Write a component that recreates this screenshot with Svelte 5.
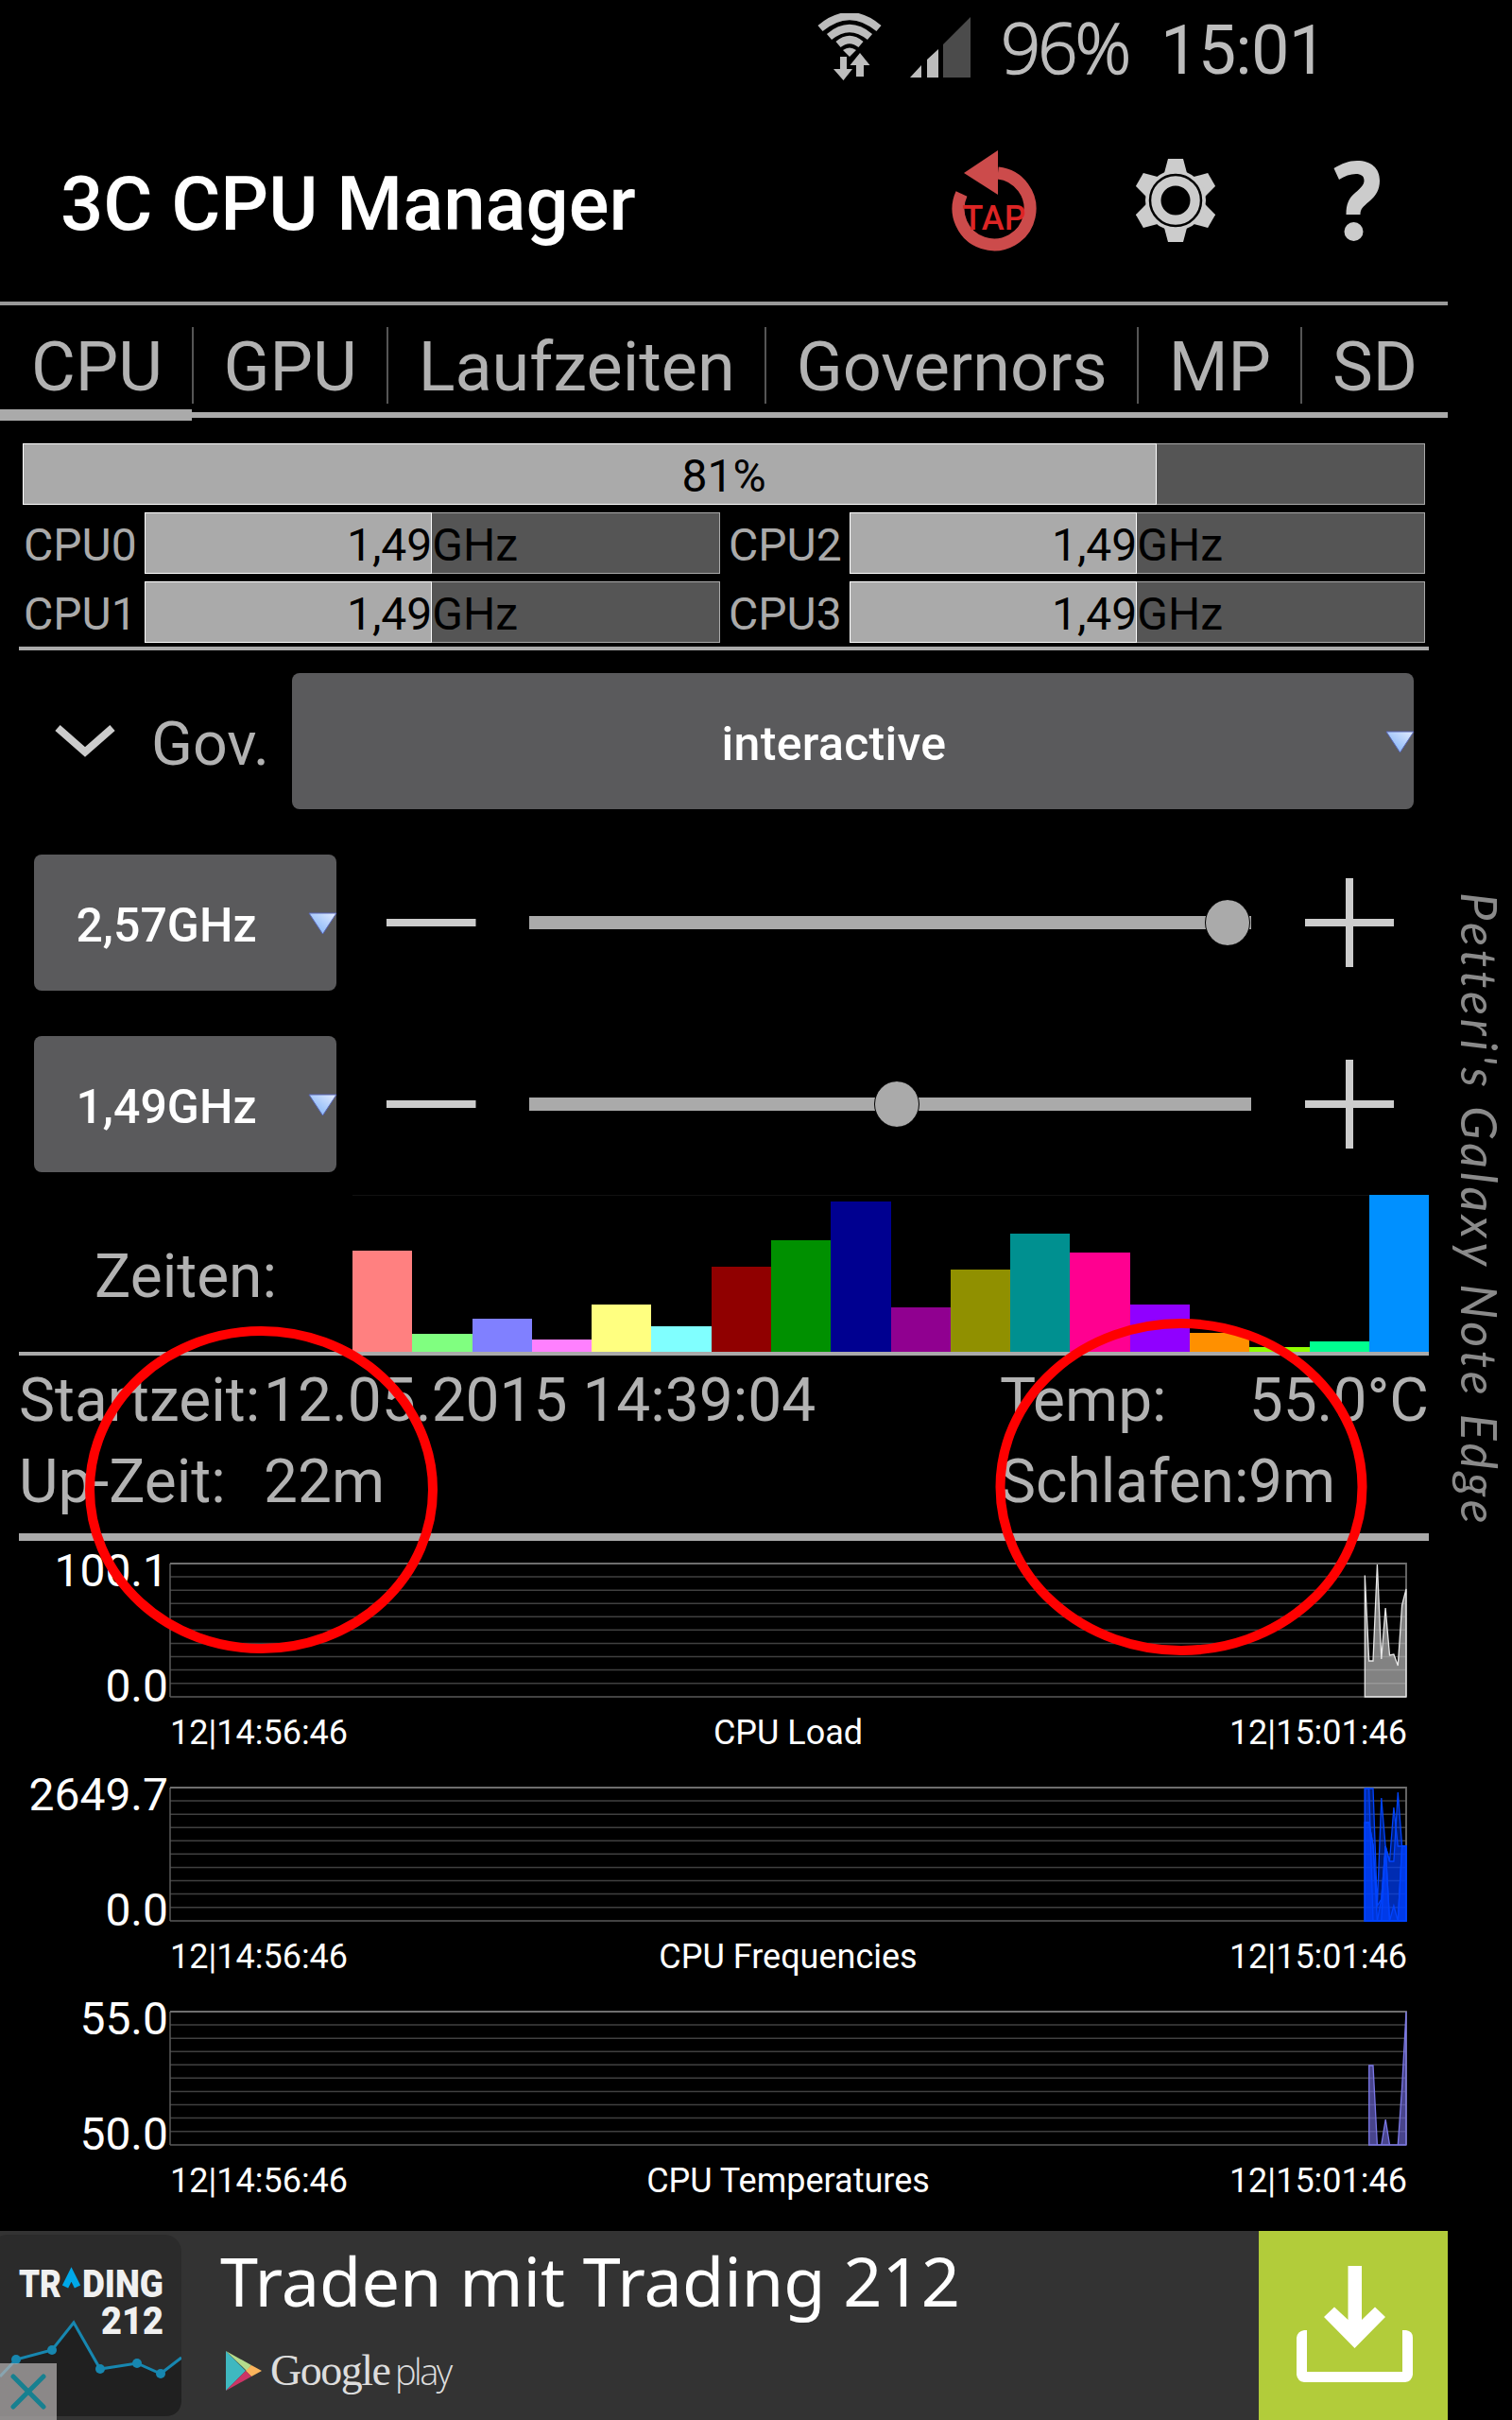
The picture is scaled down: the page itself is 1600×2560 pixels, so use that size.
<script lang="ts">
	const tabs = ['CPU', 'GPU', 'Laufzeiten', 'Governors', 'MP', 'SD'];
	let activeTab = $state('CPU');

	const load = 81;
	const cores = [
		{ name: 'CPU0', freq: '1,49GHz', fill: 50 },
		{ name: 'CPU2', freq: '1,49GHz', fill: 50 },
		{ name: 'CPU1', freq: '1,49GHz', fill: 50 },
		{ name: 'CPU3', freq: '1,49GHz', fill: 50 }
	];

	const sliders = [
		{ label: '2,57GHz', value: 739 },
		{ label: '1,49GHz', value: 389 }
	];

	// time spent in each frequency step
	const times = [
		{ color: '#ff8080', height: 107 },
		{ color: '#80ff80', height: 19 },
		{ color: '#8080ff', height: 35 },
		{ color: '#ff80ff', height: 13 },
		{ color: '#ffff80', height: 50 },
		{ color: '#80ffff', height: 27 },
		{ color: '#900000', height: 90 },
		{ color: '#009000', height: 118 },
		{ color: '#000090', height: 159 },
		{ color: '#900090', height: 47 },
		{ color: '#909000', height: 87 },
		{ color: '#009090', height: 125 },
		{ color: '#ff0090', height: 105 },
		{ color: '#9000ff', height: 50 },
		{ color: '#ff9000', height: 20 },
		{ color: '#90ff00', height: 5 },
		{ color: '#00ff90', height: 11 },
		{ color: '#0090ff', height: 166 }
	];

	const PLOT_W = 1308;
	const PLOT_H = 141;
	const STEP = 4.37;

	// series values are distances from the top of the plot, newest sample last
	const charts = [
		{
			title: 'CPU Load',
			max: '100.1',
			min: '0.0',
			stroke: '#e8e8e8',
			fill: 'rgba(200, 200, 200, 0.65)',
			series: [[12.6, 103, 103, 1, 101, 47, 97, 96, 108, 44, 27]]
		},
		{
			title: 'CPU Frequencies',
			max: '2649.7',
			min: '0.0',
			stroke: '#0044ff',
			fill: 'rgba(0, 64, 255, 0.45)',
			series: [
				[1, 1, 1, 125, 11, 62, 78, 21, 62, 62, 62],
				[37, 37, 61, 125, 118, 62, 78, 78, 5, 62, 62],
				[1, 1, 141, 141, 118, 62, 141, 125, 141, 62, 62],
				[37, 37, 61, 141, 141, 62, 141, 141, 141, 62, 62]
			]
		},
		{
			title: 'CPU Temperatures',
			max: '55.0',
			min: '50.0',
			stroke: '#7b78e6',
			fill: 'rgba(110, 105, 215, 0.65)',
			series: [[57, 57, 141, 141, 114, 141, 141, 141, 80, 0]]
		}
	];

	function linePath(values: number[]) {
		const start = PLOT_W - STEP * (values.length - 1);
		const pts = values.map((y, i) => `${(start + i * STEP).toFixed(1)} ${y}`);
		return `M${start.toFixed(1)} ${PLOT_H}L${pts.join('L')}V${PLOT_H}Z`;
	}
</script>

{#snippet arrow()}
	<svg class="arrow" width="31" height="25" viewBox="0 0 31 25">
		<defs>
			<linearGradient id="arrowFill" x1="0" y1="1" x2="1" y2="0">
				<stop offset="0.2" stop-color="#8ab8f8" />
				<stop offset="1" stop-color="#e4ecff" />
			</linearGradient>
		</defs>
		<path d="M1 1H30L15.500 23Z" fill="url(#arrowFill)" stroke="#5a68b8" stroke-width="1" />
	</svg>
{/snippet}

{#snippet meter(text: string, fill: number)}
	<div class="meter">
		<div class="fill" style="width: {fill}%"></div>
		<span>{text}</span>
	</div>
{/snippet}

<div class="screen">
	<main>
		<div class="status">
			<svg class="wifi" width="68" height="72" viewBox="0 0 68 72" fill="none" stroke="#bdbdbd">
				<path d="M3 16Q34 -10 65 16" stroke-width="8" />
				<path d="M12.500 25Q34 7 55.500 25" stroke-width="8" />
				<path d="M22 33Q34 23 46 33" stroke-width="8" />
				<path d="M27 39Q34 34 41 39L34 46Z" fill="#bdbdbd" stroke="none" />
				<path d="M24 46H31V59H37L27.500 71L17 59H24ZM41 67V55H34.500L45 42L55.500 55H49V67Z" fill="#bdbdbd" stroke="none" />
			</svg>
			<svg class="signal" width="64" height="64" viewBox="0 0 64 64">
				<path d="M0 64L12 51V64Z M18 64V45L30 34V64Z" fill="#bdbdbd" />
				<path d="M35 64V29L64 0V64Z" fill="#4b4b4b" />
			</svg>
			<span class="battery">96%</span>
			<span class="clock">15:01</span>
		</div>

		<header>
			<h1>3C CPU Manager</h1>
			<svg class="tap" width="90" height="108" viewBox="0 0 90 108">
				<path d="M10.500 46A38 38 0 1 0 49 24" fill="none" stroke="#cc4b4b" stroke-width="13" />
				<path d="M13 24L49 0V47Z" fill="#cc4b4b" />
				<text x="11.500" y="83.500">TAP</text>
			</svg>
			<svg class="gear" width="84" height="90" viewBox="-42 -45 84 90">
				{#each [0, 60, 120, 180, 240, 300] as angle}
					<path d="M-8 -44H8L12 -29L10 -20H-10L-12 -29Z" fill="#ccc" transform="rotate({angle})" />
				{/each}
				<circle r="32" fill="#ccc" />
				<circle r="27" fill="none" stroke="#000" stroke-width="2.500" />
				<circle r="15.500" fill="#000" />
			</svg>
			<svg class="help" width="50" height="86" viewBox="0 0 50 86" fill="#ccc">
				<path d="M0.500 8C9 3 16 0 25 0C40 0 49 8 49 21C49 31 45 37 38 43C31 49 28.500 51 28.500 57H13.500C13.500 46 16 40 23 34C30 28 32.500 25 32.500 21C32.500 16 29 14 24 14C18 14 12 16 6 20Z" />
				<ellipse cx="21.500" cy="75" rx="10" ry="10" />
			</svg>
		</header>

		<nav>
			{#each tabs as tab}
				<button class="tab" class:active={tab === activeTab} onclick={() => (activeTab = tab)}>
					<span>{tab}</span>
				</button>
			{/each}
		</nav>

		<section class="usage">
			{@render meter(`${load}%`, load)}
			<div class="cores">
				{#each cores as core}
					<span class="core">{core.name}</span>
					{@render meter(core.freq, core.fill)}
				{/each}
			</div>
		</section>

		<section class="governor">
			<svg width="66" height="38" viewBox="0 0 66 38">
				<path d="M4 5L33 30.500L62 5" fill="none" stroke="#ccc" stroke-width="8" />
			</svg>
			<span class="gov-label">Gov.</span>
			<button class="spinner wide">interactive{@render arrow()}</button>
		</section>

		{#each sliders as slider}
			<section class="slider-row">
				<button class="spinner">{slider.label}{@render arrow()}</button>
				<svg class="minus" width="96" height="96" viewBox="0 0 96 96">
					<path d="M0 48H94.500" stroke="#ccc" stroke-width="8" />
				</svg>
				<div class="track">
					<div class="thumb" style="left: {slider.value}px"></div>
				</div>
				<svg class="plus" width="96" height="96" viewBox="0 0 96 96">
					<path d="M1 48H95M48 1V95" stroke="#ccc" stroke-width="8" />
				</svg>
			</section>
		{/each}

		<section class="times">
			<span class="times-label">Zeiten:</span>
			<div class="bars">
				{#each times as bar}
					<div style="height: {bar.height}px; background: {bar.color}"></div>
				{/each}
			</div>
		</section>

		<section class="info">
			<span>Startzeit:</span>
			<span>12.05.2015 14:39:04</span>
			<span>Temp:</span>
			<span class="right">55.0°C</span>
			<span>Up-Zeit:</span>
			<span>22m</span>
			<span>Schlafen:</span>
			<span>9m</span>
		</section>

		<section class="charts">
			{#each charts as chart}
				<div class="chart">
					<div class="scale">
						<span>{chart.max}</span>
						<span>{chart.min}</span>
					</div>
					<svg class="plot" width={PLOT_W + 2} height={PLOT_H + 2} viewBox="-1 -1 {PLOT_W + 2} {PLOT_H + 2}">
						{#each { length: 9 } as _, i}
							<path d="M0 {(i + 1) * 14.07}H{PLOT_W}" stroke="#404040" stroke-width="1.500" />
						{/each}
						<path d="M0 {PLOT_H}V0M0 {PLOT_H}H{PLOT_W}" stroke="#5a5a5a" stroke-width="1.500" fill="none" />
						<path d="M0 0H{PLOT_W}V{PLOT_H}" stroke="#6e6e6e" stroke-width="1.800" fill="none" />
						{#each chart.series as values}
							<path d={linePath(values)} fill={chart.fill} stroke={chart.stroke} stroke-width="1.300" />
						{/each}
					</svg>
					<div class="axis">
						<span>12|14:56:46</span>
						<span>{chart.title}</span>
						<span>12|15:01:46</span>
					</div>
				</div>
			{/each}
		</section>

		<footer>
			<svg class="app-icon" width="192" height="200" viewBox="0 0 192 200">
				<rect x="-10" y="4" width="202" height="192" rx="18" fill="#2b2b2b" />
				<path d="M0 154L17 136L55 126L78 97L106 146L145 140L170 151L192 134V178Q192 196 174 196H0Z" fill="#202020" />
				<path d="M0 154L17 136L55 126L78 97L106 146L145 140L170 151L192 134" fill="none" stroke="#1787b0" stroke-width="3" />
				{#each [[17, 136], [55, 126], [106, 146], [145, 140], [170, 151]] as [cx, cy]}
					<circle {cx} {cy} r="5" fill="#1787b0" />
				{/each}
				<text x="20" y="70" textLength="45" lengthAdjust="spacingAndGlyphs">TR</text>
				<path d="M69 59L75.500 46L82 59" fill="none" stroke="#00a8e8" stroke-width="7" />
				<text x="87" y="70" textLength="86" lengthAdjust="spacingAndGlyphs">DING</text>
				<text x="107" y="109" textLength="66" lengthAdjust="spacingAndGlyphs">212</text>
				<rect y="140" width="60" height="60" fill="#b4b0b0" fill-opacity="0.720" />
				<path d="M14 154L46 186M46 154L14 186" stroke="#178090" stroke-width="5" stroke-linecap="round" />
			</svg>
			<div class="ad">
				<span class="ad-title">Traden mit Trading 212</span>
				<div class="store">
					<svg width="38" height="42" viewBox="0 0 38 42">
						<path d="M0 0V42L21 21Z" fill="#3fb8c0" />
						<path d="M0 0L27 15L22 21Z" fill="#b5dc8c" />
						<path d="M27 15L38 21L27 27L21 21Z" fill="#fbb45c" />
						<path d="M0 42L27 27L21 21Z" fill="#cc3566" />
					</svg>
					<span class="google">Google</span>
					<span class="play">play</span>
				</div>
			</div>
			<div class="download">
				<svg width="124" height="124" viewBox="0 0 124 124">
					<path d="M54.500 0H69V57L83 43.500L94 54L61.500 87L29 54L40 43.500L54.500 57Z" fill="#fff" />
					<path d="M11 68V112H112V68H116Q123 69 123 76V115Q122 122 115 123H8Q1 122 0 115V76Q1 69 8 68Z" fill="#fff" />
				</svg>
			</div>
		</footer>
	</main>

	<aside>Petteri's Galaxy Note Edge</aside>

	<svg class="marks" width="1600" height="2560" viewBox="0 0 1600 2560" fill="none" stroke="#f00" stroke-width="10">
		<ellipse cx="276.500" cy="1576" rx="181.500" ry="168" />
		<ellipse cx="1250" cy="1573" rx="191.500" ry="173" />
	</svg>
</div>

<style>
	:global(body) {
		background: #000;
	}

	.screen {
		position: relative;
		display: flex;
		width: 1600px;
		height: 2560px;
		overflow: hidden;
		background: #000;
		color: #b2b2b2;
		font-family: Roboto, 'Liberation Sans', sans-serif;
	}

	main {
		display: flex;
		flex-direction: column;
		width: 1532px;
		height: 2560px;
	}

	button {
		border: 0;
		padding: 0;
		background: none;
		color: inherit;
		font: inherit;
	}

	svg {
		flex: none;
	}

	.status {
		display: flex;
		justify-content: flex-end;
		height: 106px;
		padding-right: 134px;
		color: #bdbdbd;
		line-height: 107px;
	}

	.wifi {
		margin: 14px 30px 0 0;
	}

	.signal {
		margin: 18px 32px 0 0;
	}

	.battery {
		width: 146px;
		margin-right: 23px;
		font-family: 'Open Sans', sans-serif;
		font-size: 74px;
		font-weight: 300;
		letter-spacing: -3px;
		line-height: 99px;
		white-space: nowrap;
		-webkit-text-stroke: 1.500px #bdbdbd;
	}

	.clock {
		width: 170px;
		font-size: 72px;
		letter-spacing: -0.800px;
		white-space: nowrap;
	}

	header {
		display: flex;
		height: 213px;
		padding-left: 64px;
		color: #fff;
	}

	h1 {
		flex: none;
		width: 943px;
		margin: 0;
		font-size: 79.800px;
		font-weight: 500;
		line-height: 220px;
	}

	.tap {
		margin-top: 53px;
	}

	.tap text {
		fill: #dd2525;
		font-size: 36px;
		font-weight: 500;
	}

	.gear {
		margin: 61px 0 0 105px;
	}

	.help {
		margin: 64px 0 0 125px;
	}

	nav {
		display: flex;
		align-items: flex-start;
		box-sizing: border-box;
		height: 126px;
		border-top: 4px solid #999;
		background: linear-gradient(#aaa, #aaa) 0 113px / 100% 6px no-repeat;
	}

	.tab {
		height: 122px;
		padding: 21px 0 16px;
		font-size: 72px;
		line-height: 85px;
	}

	.tab.active {
		background: linear-gradient(#aaa, #aaa) 0 110px / 100% 12px no-repeat;
	}

	.tab span {
		display: block;
		height: 81px;
		padding: 0 31px 0 33px;
	}

	.tab + .tab span {
		padding: 0 31.500px;
		border-left: 2px solid #555;
	}

	.usage {
		margin: 24px 20px 0;
		padding: 0 4px 4px;
		border-bottom: 4px solid #aaa;
		color: #aaa;
		font-size: 48px;
	}

	.meter {
		position: relative;
		box-sizing: border-box;
		height: 65px;
		border: 1px solid #aaa;
		background: #555;
		color: #000;
		line-height: 67px;
		text-align: center;
	}

	.meter span {
		position: relative;
	}

	.fill {
		position: absolute;
		top: -1px;
		left: -1px;
		box-sizing: border-box;
		height: 65px;
		border: 1px solid #fff;
		background: #aaa;
	}

	.cores {
		display: grid;
		grid-template-columns: 129px 609px 137px 609px;
		grid-auto-rows: 65px;
		row-gap: 8px;
		margin-top: 8px;
	}

	.core {
		padding-left: 1px;
		line-height: 69px;
	}

	.core:nth-child(4n + 3) {
		padding-left: 9px;
	}

	.governor {
		display: flex;
		align-items: center;
		height: 144px;
		margin-top: 24px;
		padding: 0 36px 0 57px;
	}

	.gov-label {
		width: 149px;
		padding: 6px 0 0 37px;
		font-size: 64.500px;
	}

	.spinner {
		position: relative;
		flex: 1;
		box-sizing: border-box;
		height: 144px;
		padding: 5px 40px 0 0;
		border-radius: 8px;
		background: #5a5a5c;
		color: #fff;
		font-size: 50px;
		font-weight: 500;
		text-align: center;
	}

	.spinner.wide {
		letter-spacing: 0.300px;
	}

	.arrow {
		position: absolute;
		top: 61px;
		right: -1px;
	}

	.slider-row {
		display: flex;
		align-items: center;
		height: 144px;
		margin-top: 48px;
		padding-left: 36px;
	}

	.slider-row .spinner {
		flex: 0 0 320px;
	}

	.minus {
		margin: 0 55px 0 53px;
	}

	.plus {
		margin-left: 56px;
	}

	.track {
		position: relative;
		width: 764px;
		height: 14px;
		background: #aaa;
	}

	.thumb {
		position: absolute;
		top: -17px;
		width: 46px;
		height: 48px;
		margin-left: -24px;
		border: 0 solid #000;
		border-width: 0 1px;
		border-radius: 50%;
		background: #aaa;
	}

	.times {
		display: flex;
		align-items: center;
		height: 166px;
		margin: 24px 20px 0;
		border-bottom: 4px solid #aaa;
	}

	.times-label {
		width: 273px;
		padding: 7px 0 0 80px;
		font-size: 64px;
	}

	.bars {
		display: flex;
		flex: 1;
		align-items: flex-end;
		height: 165px;
		border-top: 1px solid #111;
	}

	.bars div {
		flex: 1;
	}

	.info {
		display: grid;
		grid-template-columns: 259px 779px 263px 191px;
		align-content: start;
		height: 188px;
		margin: 0 20px;
		padding-top: 5px;
		box-sizing: border-box;
		font-size: 64px;
		line-height: 86px;
		white-space: nowrap;
	}

	.right {
		text-align: right;
	}

	.charts {
		margin-left: 20px;
		width: 1492px;
		border-top: 8px solid #aaa;
		color: #fff;
	}

	.chart {
		display: grid;
		grid-template-columns: 158px 1310px;
		grid-template-rows: 143px 44px;
		row-gap: 15px;
		column-gap: 1px;
		height: 237px;
		padding-top: 23px;
		box-sizing: border-box;
	}

	.scale {
		display: flex;
		flex-direction: column;
		justify-content: space-between;
		height: 170px;
		margin-top: -15px;
		font-size: 48px;
		line-height: 48px;
		text-align: right;
	}

	.axis {
		display: grid;
		grid-template-columns: 1fr 1fr 1fr;
		grid-column: 2;
		height: 44px;
		font-size: 36px;
		line-height: 44px;
		text-align: center;
	}

	.axis span:first-child {
		padding-left: 1px;
		text-align: left;
	}

	.axis span:last-child {
		text-align: right;
	}

	footer {
		display: flex;
		height: 200px;
		margin-top: auto;
		background: #333;
	}

	.app-icon text {
		fill: #f0f0f0;
		font-family: Roboto, sans-serif;
		font-size: 40px;
		font-weight: 900;
	}

	.ad {
		flex: 1;
		padding-left: 41px;
	}

	.ad-title {
		display: block;
		height: 127px;
		color: #fff;
		font-family: 'Noto Sans', sans-serif;
		font-size: 72px;
		line-height: 105px;
		white-space: nowrap;
	}

	.store {
		display: flex;
		gap: 9px;
		padding-left: 6px;
		color: #ddd;
		font-size: 46px;
		line-height: 42px;
	}

	.google {
		width: 123px;
		font-family: 'Liberation Serif', serif;
		letter-spacing: -1.500px;
	}

	.play {
		font-family: 'Open Sans', sans-serif;
		font-size: 38px;
		font-weight: 300;
		letter-spacing: -2.500px;
	}

	.download {
		display: flex;
		justify-content: center;
		width: 200px;
		padding: 37px 0 0 4px;
		box-sizing: border-box;
		background: #b2cc3a;
	}

	aside {
		width: 68px;
		padding-top: 944px;
		color: #8a8a8a;
		font-family: 'Segoe Script', 'Comic Sans MS', Lato, sans-serif;
		font-size: 52px;
		font-style: italic;
		font-weight: 400;
		letter-spacing: 4px;
		line-height: 68px;
		white-space: nowrap;
		writing-mode: vertical-rl;
	}

	.marks {
		position: absolute;
		inset: 0;
		pointer-events: none;
	}
</style>
